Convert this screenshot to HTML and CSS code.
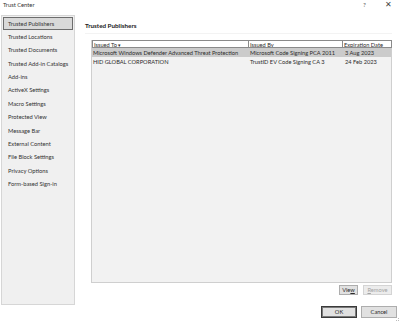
FILE: index.html
```html
<!DOCTYPE html>
<html>
<head>
<meta charset="utf-8">
<link rel="stylesheet" href="styles.css">
</head>
<body>
<div class="dialog">
  <div class="titlebar">
    <span class="title">Trust Center</span>
    <span class="help">?</span>
    <span class="close">✕</span>
  </div>
  <div class="main">
    <nav class="nav">
      <div class="nav-item selected">Trusted Publishers</div>
      <div class="nav-item">Trusted Locations</div>
      <div class="nav-item">Trusted Documents</div>
      <div class="nav-item">Trusted Add-in Catalogs</div>
      <div class="nav-item">Add-ins</div>
      <div class="nav-item">ActiveX Settings</div>
      <div class="nav-item">Macro Settings</div>
      <div class="nav-item">Protected View</div>
      <div class="nav-item">Message Bar</div>
      <div class="nav-item">External Content</div>
      <div class="nav-item">File Block Settings</div>
      <div class="nav-item">Privacy Options</div>
      <div class="nav-item">Form-based Sign-in</div>
    </nav>
    <section class="content">
      <h1 class="heading">Trusted Publishers</h1>
      <div class="sep"></div>
      <div class="list">
        <div class="row head">
          <div class="cell c1">Issued To <span class="arrow">▾</span></div>
          <div class="cell c2">Issued By</div>
          <div class="cell c3">Expiration Date</div>
        </div>
        <div class="row sel">
          <div class="cell c1">Microsoft Windows Defender Advanced Threat Protection</div>
          <div class="cell c2">Microsoft Code Signing PCA 2011</div>
          <div class="cell c3">3 Aug 2023</div>
        </div>
        <div class="row">
          <div class="cell c1">HID GLOBAL CORPORATION</div>
          <div class="cell c2">TrustID EV Code Signing CA 3</div>
          <div class="cell c3">24 Feb 2023</div>
        </div>
      </div>
      <div class="list-buttons">
        <button class="btn view">Vie<u>w</u></button>
        <button class="btn remove" disabled><u>R</u>emove</button>
      </div>
    </section>
  </div>
  <div class="footer">
    <button class="btn ok">OK</button>
    <button class="btn cancel">Cancel</button>
  </div>
  <div class="grip"></div>
</div>
</body>
</html>
```

FILE: styles.css
```css
* { box-sizing: border-box; }
html, body {
  margin: 0;
  padding: 0;
  background: #ffffff;
}
body {
  font-family: Lato, "Open Sans", sans-serif;
  font-size: 5.7px;
  color: #2b2b2b;
}
.dialog {
  width: 400px;
  height: 322px;
  position: relative;
  overflow: hidden;
}
.titlebar {
  height: 15px;
  display: flex;
  align-items: center;
  padding: 0 8px 6px 3px;
}
.title { flex: 1; font-size: 5.8px; color: #333; }
.help { font-size: 6.5px; color: #555; margin-right: 19px; }
.close { font-size: 7.5px; color: #444; }

.main {
  display: flex;
  height: 290px;
}
.nav {
  width: 74px;
  margin-left: 1px;
  background: #f0f0f0;
  border: 1px solid #d6d6d6;
  padding: 0.5px 1px;
  display: flex;
  flex-direction: column;
}
.nav-item {
  height: 13.4px;
  line-height: 12px;
  padding-left: 4px;
  white-space: nowrap;
  font-size: 5.75px;
  color: #333;
  border: 1px solid transparent;
}
.nav-item.selected {
  background: #d9d9d9;
  border: 1px solid #6d6d6d;
}
.content {
  flex: 1;
  padding-left: 10px;
  display: flex;
  flex-direction: column;
}
.heading {
  margin: 0;
  font-size: 6.3px;
  font-weight: bold;
  height: 18px;
  line-height: 10px;
  padding-top: 6px;
  color: #1a1a1a;
}
.sep {
  height: 1px;
  background: #f3f3f3;
  margin-right: 8px;
}
.list {
  margin-top: 6px;
  margin-left: 6px;
  width: 301px;
  height: 243px;
  background: #f2f2f2;
  border: 1px solid #cfcfcf;
  border-top: none;
}
.row {
  display: flex;
  height: 9px;
  line-height: 9px;
  white-space: nowrap;
  font-size: 5.7px;
}
.row.head {
  height: 8px;
  line-height: 7px;
}
.row.head .cell {
  background: #ffffff;
  border: 1px solid #8a8a8a;
  margin-right: -1px;
}
.row.sel { background: #cbcbcb; }
.cell {
  padding-left: 1px;
  overflow: hidden;
}
.c1 { width: 157px; }
.c2 { width: 95px; }
.c3 { flex: 1; }
.arrow { font-size: 5px; }

.list-buttons {
  display: flex;
  justify-content: flex-end;
  gap: 5px;
  margin-top: 2px;
  padding-right: 8px;
}
.btn {
  font-family: inherit;
  font-size: 5.7px;
  height: 10px;
  padding: 0;
  margin: 0;
  line-height: 8px;
  background: #e1e1e1;
  border: 1px solid #adadad;
  color: #2b2b2b;
}
.btn u { text-decoration: underline; }
.view { width: 19px; }
.remove { width: 29px; color: #a3a3a3; background: #ececec; border-color: #d4d4d4; }
.footer {
  display: flex;
  justify-content: flex-end;
  gap: 4px;
  padding-top: 1px;
  padding-right: 3px;
}
.footer .btn {
  width: 36px;
  height: 12px;
  line-height: 10px;
}
.ok {
  border: 1px solid #3a3a3a;
  box-shadow: inset 0 0 0 1px #7a7a7a;
}
.grip {
  position: absolute;
  right: 1px;
  bottom: 1px;
  width: 3px;
  height: 3px;
  border-right: 1px dotted #bbb;
  border-bottom: 1px dotted #bbb;
}
```
